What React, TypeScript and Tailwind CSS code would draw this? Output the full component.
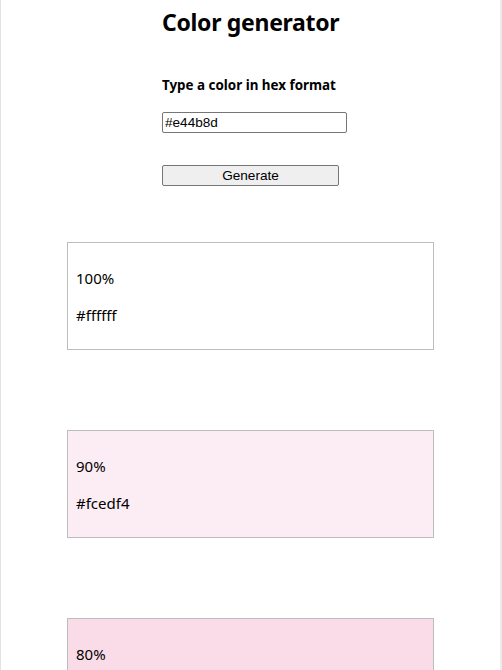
const shades = [
  { pct: '100%', hex: '#ffffff', bg: 'bg-[#ffffff]' },
  { pct: '90%', hex: '#fcedf4', bg: 'bg-[#fcedf4]' },
  { pct: '80%', hex: '#fadbe8', bg: 'bg-[#fadbe8]' },
];

export default function App() {
  return (
    <div className="flex min-h-[670px] w-[502px] bg-white text-black">
      <div className="flex-1 border-l border-[#e3e3e3] font-['Noto_Sans',sans-serif]">
        <div className="flex flex-col items-center">
          <div className="flex w-[177px] flex-col">
            <h1 className="mt-[6px] whitespace-nowrap text-center text-[23px] font-bold leading-[32px] tracking-[-0.3px]">
              Color generator
            </h1>
            <label className="mt-[38px] whitespace-nowrap text-[13.4px] font-bold leading-[18px]">
              Type a color in hex format
            </label>
            <input
              type="text"
              defaultValue="#e44b8d"
              className="mt-[18px] h-[21px] w-[185px] rounded-[2px] border border-[#767676] px-[2px] font-['Liberation_Sans',Arial,sans-serif] text-[13.6px] outline-none"
            />
            <button className="mt-[32px] h-[21px] w-[177px] rounded-[2px] border border-[#767676] bg-[#efefef] font-['Liberation_Sans',Arial,sans-serif] text-[13.6px] leading-none">
              Generate
            </button>
          </div>
        </div>
        <div className="mt-[56px] flex flex-col items-center gap-[80px]">
          {shades.map((s) => (
            <div
              key={s.pct}
              className={`h-[108px] w-[367px] shrink-0 border border-[#bdbdbd] px-[8px] pt-[24px] text-[15px] leading-[22px] ${s.bg}`}
            >
              <p>{s.pct}</p>
              <p className="mt-[15px]">{s.hex}</p>
            </div>
          ))}
        </div>
      </div>
      <div className="w-[2px] shrink-0 bg-[#ececec]" />
    </div>
  );
}
